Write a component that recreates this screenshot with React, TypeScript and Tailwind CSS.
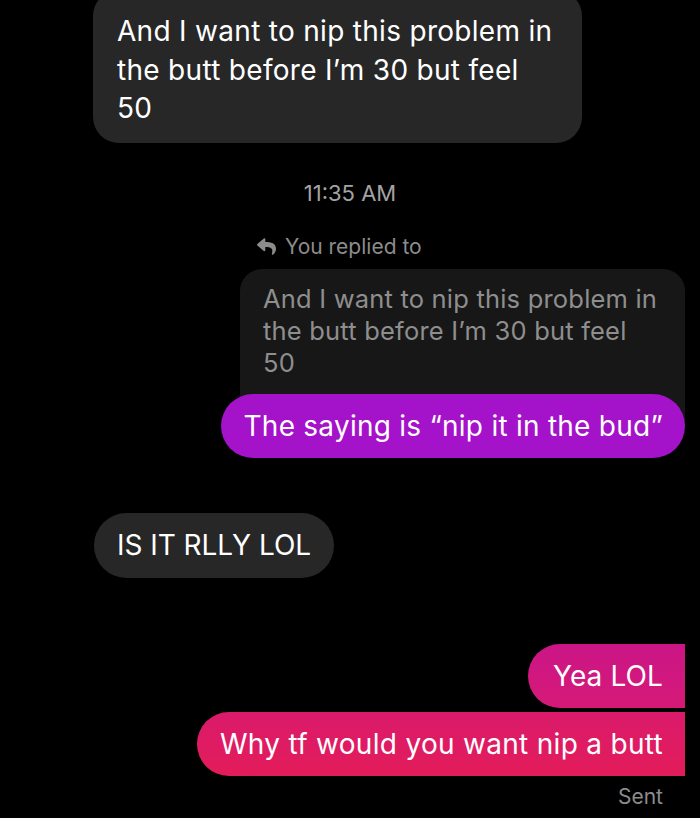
import { FaReply } from 'react-icons/fa';

const font = { fontFamily: 'Inter, "Noto Sans", sans-serif' };

export default function App() {
  return (
    <div className="w-[700px] h-[818px] overflow-hidden bg-black text-white" style={font}>
      {/* incoming, cut off at top */}
      <div className="ml-[93px] -mt-[10px] w-[489px] rounded-[26px] bg-[#272727] pl-[24px] pr-2 pt-[22px] pb-[15px] text-[28px] leading-[38.5px] tracking-[0.3px]">
        <div>And I want to nip this problem in</div>
        <div>the butt before I’m 30 but feel</div>
        <div>50</div>
      </div>

      <div className="mt-[38px] text-center text-[22px] leading-6 text-[#a3a3a3]">11:35 AM</div>

      <div className="mt-[30px] ml-[256px] flex items-center gap-[8px] text-[21px] leading-6 text-[#8c8c8c]">
        <FaReply className="h-[19px] w-[21px]" />
        <span>You replied to</span>
      </div>

      {/* reply block */}
      <div className="mt-[10px] flex flex-col items-end pr-[15px]">
        <div className="w-[445px] rounded-t-[22px] bg-[#171717] pl-[23px] pt-[14px] pb-[42px] text-[25.5px] leading-[32px] text-[#8e8e8e] tracking-[0.2px]">
          <div>And I want to nip this problem in</div>
          <div>the butt before I’m 30 but feel</div>
          <div>50</div>
        </div>
        <div className="-mt-[27px] flex h-[64px] items-center rounded-full bg-[#a412c9] pl-[23px] pr-[22px] text-[28px] tracking-[0.25px]">
          The saying is “nip it in the bud”
        </div>
      </div>

      <div className="mt-[55px] ml-[94px] inline-flex h-[65px] items-center rounded-full bg-[#272727] px-[23px] text-[28px] tracking-[-0.05px]">
        IS IT RLLY LOL
      </div>

      <div className="mt-[66px] flex flex-col items-end gap-[4px] pr-[15px]">
        <div className="flex h-[64px] items-center rounded-l-full rounded-tr-[32px] rounded-br-[6px] bg-gradient-to-b from-[#cb1587] to-[#d61977] pl-[25px] pr-[22px] text-[28px] tracking-[0.1px]">
          Yea LOL
        </div>
        <div className="flex h-[64px] items-center rounded-l-full rounded-br-[32px] rounded-tr-[6px] bg-gradient-to-b from-[#da1a6b] to-[#e31c5a] pl-[23px] pr-[22px] text-[28px] tracking-[0.3px]">
          Why tf would you want nip a butt
        </div>
        <div className="mt-[5px] pr-[22px] text-[21px] leading-6 text-[#8c8c8c]">Sent</div>
      </div>
    </div>
  );
}
